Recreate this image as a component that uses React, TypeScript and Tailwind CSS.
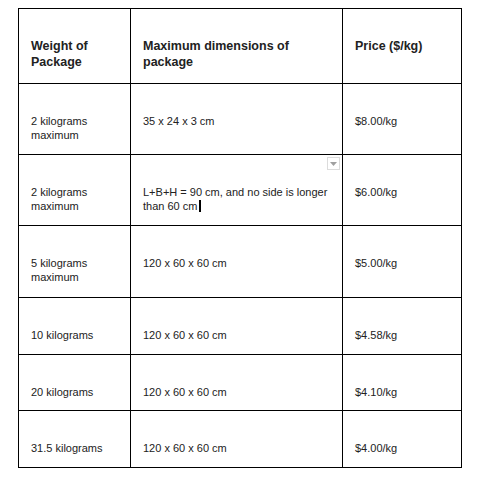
import React from "react";

type Row = {
  height: string;
  cells: React.ReactNode[];
};

const rows: Row[] = [
  {
    height: "h-[71px]",
    cells: [
      <>2 kilograms<br />maximum</>,
      "35 x 24 x 3 cm",
      "$8.00/kg",
    ],
  },
  {
    height: "h-[71px]",
    cells: [
      <>2 kilograms<br />maximum</>,
      <>
        L+B+H = 90 cm, and no side is longer
        <br />
        than 60 cm
        <span className="ml-[2px] inline-block h-[12px] w-[2px] bg-black align-[-2px]" />
      </>,
      "$6.00/kg",
    ],
  },
  {
    height: "h-[72px]",
    cells: [
      <>5 kilograms<br />maximum</>,
      "120 x 60 x 60 cm",
      "$5.00/kg",
    ],
  },
  { height: "h-[57px]", cells: ["10 kilograms", "120 x 60 x 60 cm", "$4.58/kg"] },
  { height: "h-[56px]", cells: ["20 kilograms", "120 x 60 x 60 cm", "$4.10/kg"] },
  { height: "h-[57px]", cells: ["31.5 kilograms", "120 x 60 x 60 cm", "$4.00/kg"] },
];

const headers: React.ReactNode[] = [
  <>Weight of<br />Package</>,
  <>Maximum dimensions of<br />package</>,
  "Price ($/kg)",
];

export default function App() {
  return (
    <div className="min-h-[480px] w-[482px] bg-white pt-[8px] pl-[18px] font-['Liberation_Sans',Arial,sans-serif] text-[#222]">
      <div className="grid w-[444px] grid-cols-[112px_212px_119px] border-l border-t border-black">
        {/* Header row */}
        {headers.map((h, i) => (
          <div
            key={i}
            className="h-[75px] border-b border-r border-black px-3 pt-[29px] text-[12.5px] font-bold leading-[16px]"
          >
            {h}
          </div>
        ))}

        {/* Body rows */}
        {rows.map((row, r) =>
          row.cells.map((cell, c) => (
            <div
              key={`${r}-${c}`}
              className={`relative ${row.height} border-b border-r border-black px-3 pt-[30px] text-[11px] leading-[14px]`}
            >
              {cell}
              {r === 1 && c === 1 && (
                // small dropdown toggle in the corner of the selected cell
                <div className="absolute right-[2px] top-[2px] flex h-[13px] w-[13px] items-center justify-center border border-[#dcdcdc] bg-white">
                  <svg width="7" height="4" viewBox="0 0 7 4">
                    <path d="M0 0 L7 0 L3.5 4 Z" fill="#a0a0a0" />
                  </svg>
                </div>
              )}
            </div>
          ))
        )}
      </div>
    </div>
  );
}
